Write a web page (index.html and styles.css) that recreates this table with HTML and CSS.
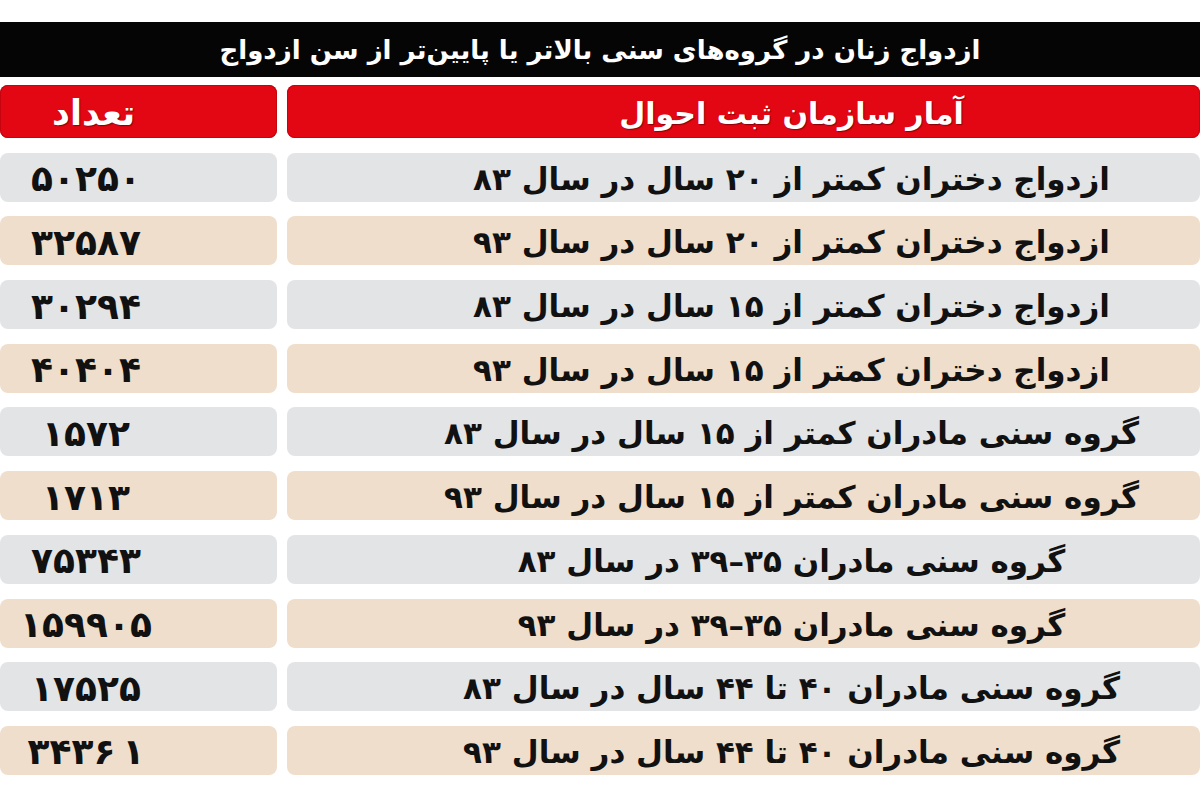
FILE: index.html
```html
<!DOCTYPE html>
<html lang="fa" dir="rtl">
<head>
<meta charset="utf-8">
<title>ازدواج زنان</title>
<link rel="stylesheet" href="styles.css">
</head>
<body>
<div class="page">
  <div class="title">ازدواج زنان در گروه‌های سنی بالاتر یا پایین‌تر از سن ازدواج</div>
  <div class="table">
    <div class="cell head main">آمار سازمان ثبت احوال</div>
    <div class="cell head num head-num">تعداد</div>

    <div class="cell gray main">ازدواج دختران کمتر از ۲۰ سال در سال ۸۳</div>
    <div class="cell gray num">۵۰۲۵۰</div>

    <div class="cell beige main">ازدواج دختران کمتر از ۲۰ سال در سال ۹۳</div>
    <div class="cell beige num">۳۲۵۸۷</div>

    <div class="cell gray main">ازدواج دختران کمتر از ۱۵ سال در سال ۸۳</div>
    <div class="cell gray num">۳۰۲۹۴</div>

    <div class="cell beige main">ازدواج دختران کمتر از ۱۵ سال در سال ۹۳</div>
    <div class="cell beige num">۴۰۴۰۴</div>

    <div class="cell gray main">گروه سنی مادران کمتر از ۱۵ سال در سال ۸۳</div>
    <div class="cell gray num">۱۵۷۲</div>

    <div class="cell beige main">گروه سنی مادران کمتر از ۱۵ سال در سال ۹۳</div>
    <div class="cell beige num">۱۷۱۳</div>

    <div class="cell gray main">گروه سنی مادران ۳۵–۳۹ در سال ۸۳</div>
    <div class="cell gray num">۷۵۳۴۳</div>

    <div class="cell beige main">گروه سنی مادران ۳۵–۳۹ در سال ۹۳</div>
    <div class="cell beige num">۱۵۹۹۰۵</div>

    <div class="cell gray main">گروه سنی مادران ۴۰ تا ۴۴ سال در سال ۸۳</div>
    <div class="cell gray num">۱۷۵۲۵</div>

    <div class="cell beige main">گروه سنی مادران ۴۰ تا ۴۴ سال در سال ۹۳</div>
    <div class="cell beige num">۳۴۳۶&#8201;۱</div>
  </div>
</div>
</body>
</html>
```

FILE: styles.css
```css
html, body {
  margin: 0;
  padding: 0;
  background: #ffffff;
}

body {
  font-family: "DejaVu Sans", "Noto Sans", sans-serif;
  font-weight: bold;
  color: #111111;
}

.page {
  width: 1200px;
  padding-top: 22px;
}

.title {
  height: 55px;
  background: #050505;
  color: #ffffff;
  font-size: 26px;
  display: flex;
  align-items: center;
  justify-content: center;
  margin-bottom: 8px;
}

.table {
  display: grid;
  grid-template-columns: 913px 277px;
  grid-template-rows: 53px repeat(10, 49px);
  column-gap: 10px;
  row-gap: 14.7px;
}

.cell {
  display: flex;
  align-items: center;
  justify-content: center;
  border-radius: 8px;
  font-size: 31px;
  padding-top: 3px;
}

.main {
  padding-left: 96px;
}

.num {
  direction: ltr;
  padding-right: 105px;
  font-size: 36px;
}

.head {
  background: #e30613;
  color: #ffffff;
  box-shadow: inset 0 0 0 1px #c4040f;
  text-shadow: 1px 1px 1px rgba(80, 0, 0, 0.6);
  font-size: 30px;
}

.head-num {
  direction: rtl;
  font-size: 35px;
  padding-right: 90px;
}

.gray {
  background: #e3e4e6;
}

.beige {
  background: #efdecb;
}
```
